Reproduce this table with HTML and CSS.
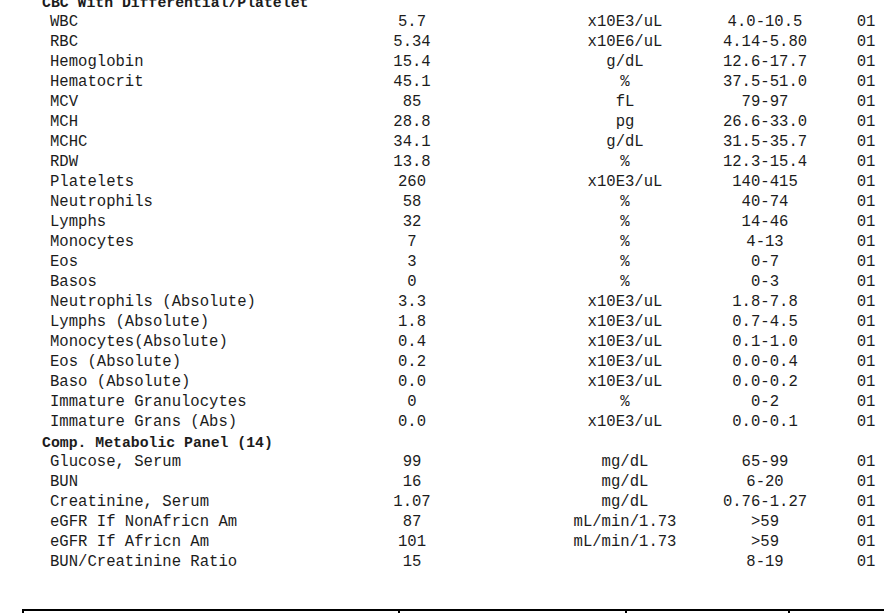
FILE: index.html
```html
<!DOCTYPE html>
<html lang="en">
<head>
<meta charset="utf-8">
<title>Lab Results</title>
<link rel="stylesheet" href="styles.css">
</head>
<body>
<div class="report">
  <div class="results">
    <div class="panel">CBC With Differential/Platelet</div>
    <div class="name">WBC</div><div class="val">5.7</div><div class="unit">x10E3/uL</div><div class="range">4.0-10.5</div><div class="lab">01</div>
    <div class="name">RBC</div><div class="val">5.34</div><div class="unit">x10E6/uL</div><div class="range">4.14-5.80</div><div class="lab">01</div>
    <div class="name">Hemoglobin</div><div class="val">15.4</div><div class="unit">g/dL</div><div class="range">12.6-17.7</div><div class="lab">01</div>
    <div class="name">Hematocrit</div><div class="val">45.1</div><div class="unit">%</div><div class="range">37.5-51.0</div><div class="lab">01</div>
    <div class="name">MCV</div><div class="val">85</div><div class="unit">fL</div><div class="range">79-97</div><div class="lab">01</div>
    <div class="name">MCH</div><div class="val">28.8</div><div class="unit">pg</div><div class="range">26.6-33.0</div><div class="lab">01</div>
    <div class="name">MCHC</div><div class="val">34.1</div><div class="unit">g/dL</div><div class="range">31.5-35.7</div><div class="lab">01</div>
    <div class="name">RDW</div><div class="val">13.8</div><div class="unit">%</div><div class="range">12.3-15.4</div><div class="lab">01</div>
    <div class="name">Platelets</div><div class="val">260</div><div class="unit">x10E3/uL</div><div class="range">140-415</div><div class="lab">01</div>
    <div class="name">Neutrophils</div><div class="val">58</div><div class="unit">%</div><div class="range">40-74</div><div class="lab">01</div>
    <div class="name">Lymphs</div><div class="val">32</div><div class="unit">%</div><div class="range">14-46</div><div class="lab">01</div>
    <div class="name">Monocytes</div><div class="val">7</div><div class="unit">%</div><div class="range">4-13</div><div class="lab">01</div>
    <div class="name">Eos</div><div class="val">3</div><div class="unit">%</div><div class="range">0-7</div><div class="lab">01</div>
    <div class="name">Basos</div><div class="val">0</div><div class="unit">%</div><div class="range">0-3</div><div class="lab">01</div>
    <div class="name">Neutrophils (Absolute)</div><div class="val">3.3</div><div class="unit">x10E3/uL</div><div class="range">1.8-7.8</div><div class="lab">01</div>
    <div class="name">Lymphs (Absolute)</div><div class="val">1.8</div><div class="unit">x10E3/uL</div><div class="range">0.7-4.5</div><div class="lab">01</div>
    <div class="name">Monocytes(Absolute)</div><div class="val">0.4</div><div class="unit">x10E3/uL</div><div class="range">0.1-1.0</div><div class="lab">01</div>
    <div class="name">Eos (Absolute)</div><div class="val">0.2</div><div class="unit">x10E3/uL</div><div class="range">0.0-0.4</div><div class="lab">01</div>
    <div class="name">Baso (Absolute)</div><div class="val">0.0</div><div class="unit">x10E3/uL</div><div class="range">0.0-0.2</div><div class="lab">01</div>
    <div class="name">Immature Granulocytes</div><div class="val">0</div><div class="unit">%</div><div class="range">0-2</div><div class="lab">01</div>
    <div class="name">Immature Grans (Abs)</div><div class="val">0.0</div><div class="unit">x10E3/uL</div><div class="range">0.0-0.1</div><div class="lab">01</div>
    <div class="panel">Comp. Metabolic Panel (14)</div>
    <div class="name">Glucose, Serum</div><div class="val">99</div><div class="unit">mg/dL</div><div class="range">65-99</div><div class="lab">01</div>
    <div class="name">BUN</div><div class="val">16</div><div class="unit">mg/dL</div><div class="range">6-20</div><div class="lab">01</div>
    <div class="name">Creatinine, Serum</div><div class="val">1.07</div><div class="unit">mg/dL</div><div class="range">0.76-1.27</div><div class="lab">01</div>
    <div class="name">eGFR If NonAfricn Am</div><div class="val">87</div><div class="unit">mL/min/1.73</div><div class="range">&gt;59</div><div class="lab">01</div>
    <div class="name">eGFR If Africn Am</div><div class="val">101</div><div class="unit">mL/min/1.73</div><div class="range">&gt;59</div><div class="lab">01</div>
    <div class="name">BUN/Creatinine Ratio</div><div class="val">15</div><div class="unit"></div><div class="range">8-19</div><div class="lab">01</div>
  </div>
  <div class="footer-grid">
    <div class="cell"></div><div class="cell"></div><div class="cell"></div><div class="cell"></div>
  </div>
</div>
</body>
</html>
```

FILE: styles.css
```css
html, body {
  margin: 0;
  padding: 0;
  overflow: hidden;
  background: #fff;
}

body {
  font-family: "Liberation Mono", "Courier New", monospace;
  font-size: 15.6px;
  color: #1c1c1c;
}

.report {
  margin-top: -8px;
}

.results {
  display: grid;
  grid-template-columns: [name] 264px [val] 212px 37px [unit] 140px [range] 140px [lab] 62px;
  grid-auto-rows: 20px;
  padding-left: 42px;
  line-height: 20px;
  white-space: pre;
}

.panel {
  grid-column: 1 / -1;
  font-weight: bold;
  font-size: 14.8px;
  line-height: 16px;
  padding-top: 3px;
}

.name {
  grid-column: name;
  padding-left: 8px;
}

.val {
  grid-column: val;
  text-align: center;
}

.unit {
  grid-column: unit;
  text-align: center;
}

.range {
  grid-column: range;
  text-align: center;
}

.lab {
  grid-column: lab;
  text-align: center;
}

.footer-grid {
  display: grid;
  grid-template-columns: 376px 227px 163px 200px;
  margin: 37px 0 0 22px;
  border-top: 2px solid #000;
}

.cell {
  box-sizing: border-box;
  height: 40px;
  border-left: 2px solid #000;
}
```
